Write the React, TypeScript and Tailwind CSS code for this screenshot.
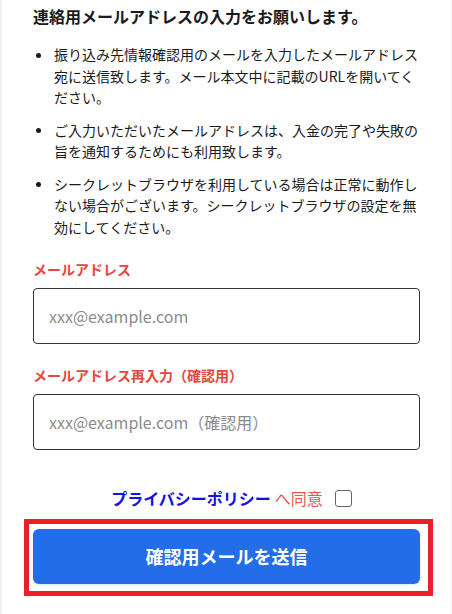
import { useState } from 'react'

const notes = [
  '振り込み先情報確認用のメールを入力したメールアドレス宛に送信致します。メール本文中に記載のURLを開いてください。',
  'ご入力いただいたメールアドレスは、入金の完了や失敗の旨を通知するためにも利用致します。',
  'シークレットブラウザを利用している場合は正常に動作しない場合がございます。シークレットブラウザの設定を無効にしてください。',
]

export default function App() {
  const [email, setEmail] = useState('')
  const [confirm, setConfirm] = useState('')
  const [agreed, setAgreed] = useState(false)

  return (
    <div
      className="flex min-h-[614px] bg-[#f2f2f2] pl-[2px] pr-[1px]"
      style={{ fontFamily: '"Noto Sans CJK JP", "Noto Sans", sans-serif' }}
    >
      <div className="w-full bg-white px-[31px] pb-[17px] pt-[4px] text-[#1a1a1a]">
        <h2 className="text-[16px] font-bold leading-[24px]">連絡用メールアドレスの入力をお願いします。</h2>

        <ul className="mt-[16px] flex flex-col gap-[11px]">
          {notes.map((n) => (
            <li key={n} className="flex text-[14px] leading-[21.5px]">
              <span className="mt-[8.5px] ml-[3px] mr-[13px] h-[5px] w-[5px] shrink-0 rounded-full bg-[#1a1a1a]" />
              <span>{n}</span>
            </li>
          ))}
        </ul>

        <label className="mt-[21px] block text-[14px] font-bold leading-[20px] text-[#e8453c]">メールアドレス</label>
        <input
          type="email"
          value={email}
          onChange={(e) => setEmail(e.target.value)}
          placeholder="xxx@example.com"
          className="mt-[9px] block h-[56px] w-full rounded-[4px] border border-[#333] px-[15px] text-[16px] outline-none placeholder:text-[#8c8c8c]"
        />

        <label className="mt-[21px] block text-[14px] font-bold leading-[20px] text-[#e8453c]">
          メールアドレス再入力（確認用）
        </label>
        <input
          type="email"
          value={confirm}
          onChange={(e) => setConfirm(e.target.value)}
          placeholder="xxx@example.com（確認用）"
          className="mt-[9px] block h-[56px] w-full rounded-[4px] border border-[#333] px-[15px] text-[16px] outline-none placeholder:text-[#8c8c8c]"
        />

        <div className="mt-[36px] flex items-center justify-center pl-[10px] text-[16px] leading-[24px]">
          <a href="#" className="font-bold text-[#1410e6]">プライバシーポリシー</a>
          <span className="ml-[4px] text-[#e8564f]">へ同意</span>
          <button
            type="button"
            onClick={() => setAgreed(!agreed)}
            className="ml-[12px] h-[17px] w-[17px] rounded-[3px] border border-[#666] bg-white"
          >
            {agreed && <span className="block text-[12px] leading-[15px]">✓</span>}
          </button>
        </div>

        <div className="-ml-[9px] -mr-[13px] mt-[9px] border-[5px] border-[#e8202a] pb-[7px] pl-[4px] pr-[8px] pt-[5px]">
          <button
            type="button"
            className="block h-[55px] w-full rounded-[6px] bg-[#246de9] text-[18px] font-bold text-white shadow-[0_1px_3px_rgba(0,0,0,0.12)]"
          >
            確認用メールを送信
          </button>
        </div>
      </div>
    </div>
  )
}
